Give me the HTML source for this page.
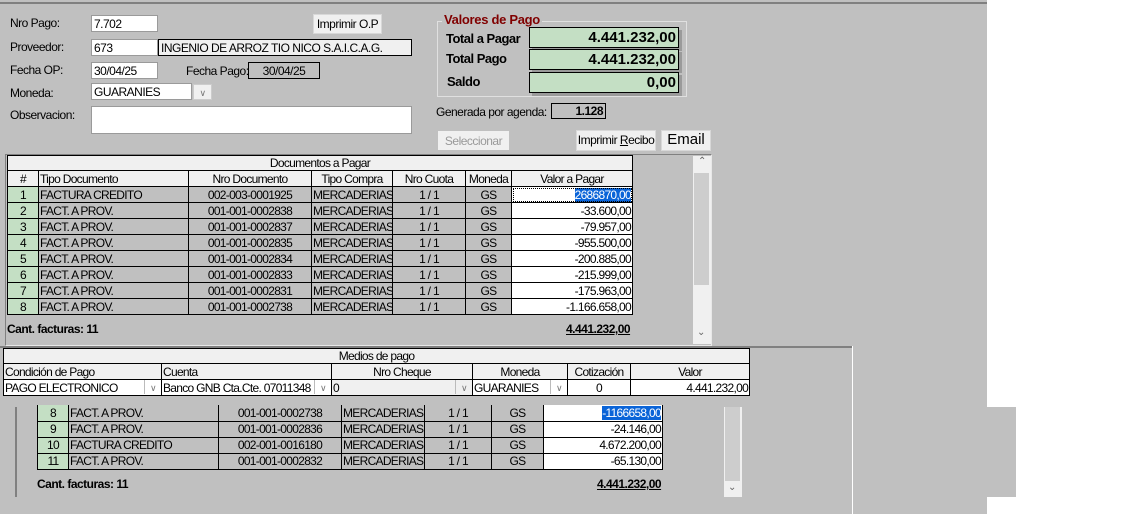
<!DOCTYPE html>
<html><head><meta charset="utf-8"><style>
*{box-sizing:border-box;margin:0;padding:0}
body{width:1123px;height:514px;background:#fff;font-family:"Liberation Sans",Arial,sans-serif;font-size:12px;color:#000;position:relative;overflow:hidden;letter-spacing:-0.5px}
.a{position:absolute}
.bg{background:#c0c0c0}
.inp{position:absolute;background:#fff;border:1px solid #9a9a9a;height:17px;padding:1px 2px;white-space:nowrap;overflow:hidden}
.ro{position:absolute;background:#f0f0f0;border:1px solid #000;height:17px;padding:1px 2px;white-space:nowrap}
.btn{position:absolute;background:#f0f0f0;border:1px solid #d8d8d8;text-align:center;line-height:18px;white-space:nowrap}
.grn{position:absolute;background:#c4dfc4;border:1px solid #000;box-shadow:3px 3px 0 #9a9a9a;text-align:right;font-weight:bold;font-size:15px;padding:1px 2px;height:21px;letter-spacing:0}
.lbl{position:absolute;white-space:nowrap}
table{position:absolute;border-collapse:collapse;table-layout:fixed}
td{border:1px solid #000;height:16px;padding:0 1px;white-space:nowrap;overflow:hidden;text-align:center;line-height:14px;letter-spacing:-0.7px}
td.l{text-align:left}
tr.d td{background:#c0c0c0}
tr.d td.n{background:#c4dfc4}
tr.d td.r{background:#fff;text-align:right}
tr.h td{background:#f0f0f0}
.sel{background:#0a64d8;color:#fff}
.dd{position:absolute;right:0;top:0;width:17px;height:14px;border-left:1px solid #bbb;color:#777;font-size:9px;text-align:center;line-height:16px}
td.c{position:relative;background:#fff;text-align:left}
.sb{position:absolute;background:#f0f0f0;color:#666;font-size:10px;text-align:center}
</style></head><body>
<div class="a bg" style="left:0;top:0;width:987px;height:514px"></div>
<div class="a bg" style="left:987px;top:407px;width:29px;height:90px"></div>
<div class="a" style="left:0;top:2px;width:987px;height:2px;background:#808080"></div>

<div class="lbl" style="left:10px;top:16px">Nro Pago:</div>
<div class="inp" style="left:91px;top:15px;width:67px">7.702</div>
<div class="btn" style="left:313px;top:14px;width:69px;height:20px">Imprimir O.P</div>
<div class="lbl" style="left:10px;top:40px">Proveedor:</div>
<div class="inp" style="left:91px;top:39px;width:67px">673</div>
<div class="ro" style="left:158px;top:39px;width:254px">INGENIO DE ARROZ TIO NICO S.A.I.C.A.G.</div>
<div class="lbl" style="left:10px;top:63px">Fecha OP:</div>
<div class="inp" style="left:91px;top:62px;width:67px">30/04/25</div>
<div class="lbl" style="left:186px;top:64px">Fecha Pago:</div>
<div class="ro" style="left:248px;top:62px;width:72px;text-align:center;background:#c0c0c0">30/04/25</div>
<div class="lbl" style="left:10px;top:86px">Moneda:</div>
<div class="inp" style="left:91px;top:83px;width:101px">GUARANIES</div>
<div class="a" style="left:193px;top:84px;width:19px;height:16px;background:#f0f0f0;border:1px solid #ccc;color:#777;font-size:9px;text-align:center;line-height:16px">&#8744;</div>
<div class="lbl" style="left:10px;top:108px">Observacion:</div>
<div class="inp" style="left:91px;top:106px;width:321px;height:28px"></div>

<div class="a" style="left:437px;top:21px;width:250px;height:76px;border:1px solid #e0e0e0"></div>
<div class="lbl" style="left:442px;top:12px;background:#c0c0c0;padding:0 2px;color:#800000;font-weight:bold;font-size:13px;letter-spacing:-0.3px">Valores de Pago</div>
<div class="lbl" style="left:446px;top:31px;font-weight:bold;font-size:13px">Total a Pagar</div>
<div class="grn" style="left:529px;top:27px;width:150px">4.441.232,00</div>
<div class="lbl" style="left:446px;top:51px;font-weight:bold;font-size:13px">Total Pago</div>
<div class="grn" style="left:529px;top:49px;width:150px">4.441.232,00</div>
<div class="lbl" style="left:447px;top:74px;font-weight:bold;font-size:13px">Saldo</div>
<div class="grn" style="left:529px;top:72px;width:150px">0,00</div>
<div class="lbl" style="left:436px;top:105px">Generada por agenda:</div>
<div class="ro" style="left:551px;top:103px;width:55px;height:16px;line-height:12px;text-align:right;font-weight:bold;background:#c0c0c0">1.128</div>
<div class="btn" style="left:438px;top:131px;width:71px;height:19px;color:#999;border-color:#f0f0f0">Seleccionar</div>
<div class="btn" style="left:576px;top:130px;width:80px;height:21px">Imprimir <u>R</u>ecibo</div>
<div class="btn" style="left:661px;top:130px;width:50px;height:21px;font-size:15px;letter-spacing:0">Email</div>

<div class="a" style="left:5px;top:154px;width:707px;height:192px;border:1px solid #e8e8e8;border-top-color:#808080;border-left-color:#808080"></div>
<table style="left:7px;top:155px;width:625px">
<colgroup><col style="width:31px"><col style="width:150px"><col style="width:123px"><col style="width:81px"><col style="width:73px"><col style="width:46px"><col style="width:121px"></colgroup>
<tr class="h"><td colspan="7" style="height:15px">Documentos a Pagar</td></tr>
<tr class="h"><td>#</td><td class="l">Tipo Documento</td><td>Nro Documento</td><td>Tipo Compra</td><td>Nro Cuota</td><td>Moneda</td><td>Valor a Pagar</td></tr>
<tr class="d"><td class="n">1</td><td class="l">FACTURA CREDITO</td><td>002-003-0001925</td><td>MERCADERIAS</td><td>1 / 1</td><td>GS</td><td class="r" style="outline:1px dotted #000;outline-offset:-2px"><span class="sel">2686870,00</span></td></tr>
<tr class="d"><td class="n">2</td><td class="l">FACT. A PROV.</td><td>001-001-0002838</td><td>MERCADERIAS</td><td>1 / 1</td><td>GS</td><td class="r">-33.600,00</td></tr>
<tr class="d"><td class="n">3</td><td class="l">FACT. A PROV.</td><td>001-001-0002837</td><td>MERCADERIAS</td><td>1 / 1</td><td>GS</td><td class="r">-79.957,00</td></tr>
<tr class="d"><td class="n">4</td><td class="l">FACT. A PROV.</td><td>001-001-0002835</td><td>MERCADERIAS</td><td>1 / 1</td><td>GS</td><td class="r">-955.500,00</td></tr>
<tr class="d"><td class="n">5</td><td class="l">FACT. A PROV.</td><td>001-001-0002834</td><td>MERCADERIAS</td><td>1 / 1</td><td>GS</td><td class="r">-200.885,00</td></tr>
<tr class="d"><td class="n">6</td><td class="l">FACT. A PROV.</td><td>001-001-0002833</td><td>MERCADERIAS</td><td>1 / 1</td><td>GS</td><td class="r">-215.999,00</td></tr>
<tr class="d"><td class="n">7</td><td class="l">FACT. A PROV.</td><td>001-001-0002831</td><td>MERCADERIAS</td><td>1 / 1</td><td>GS</td><td class="r">-175.963,00</td></tr>
<tr class="d"><td class="n">8</td><td class="l">FACT. A PROV.</td><td>001-001-0002738</td><td>MERCADERIAS</td><td>1 / 1</td><td>GS</td><td class="r">-1.166.658,00</td></tr>
</table>
<div class="lbl" style="left:7px;top:322px;font-weight:bold">Cant. facturas: 11</div>
<div class="lbl" style="left:566px;top:322px;font-weight:bold;text-decoration:underline">4.441.232,00</div>
<div class="sb" style="left:693px;top:156px;width:18px;height:188px">&#8963;</div>
<div class="a" style="left:694px;top:173px;width:15px;height:112px;background:#cdcdcd"></div>
<div class="lbl" style="left:697px;top:327px;color:#666;font-size:10px">&#8964;</div>

<div class="a" style="left:0;top:346px;width:852px;height:2px;background:#808080"></div>
<div class="a" style="left:852px;top:346px;width:1px;height:168px;background:#fff"></div>
<table style="left:3px;top:348px;width:746px">
<colgroup><col style="width:158px"><col style="width:170px"><col style="width:141px"><col style="width:95px"><col style="width:63px"><col style="width:119px"></colgroup>
<tr class="h"><td colspan="6" style="height:15px">Medios de pago</td></tr>
<tr class="h"><td class="l">Condición de Pago</td><td class="l">Cuenta</td><td>Nro Cheque</td><td>Moneda</td><td>Cotización</td><td>Valor</td></tr>
<tr><td class="c">PAGO ELECTRONICO<span class="dd">&#8744;</span></td><td class="c">Banco GNB Cta.Cte. 07011348<span class="dd">&#8744;</span></td><td class="c" style="background:#f0f0f0">0<span class="dd">&#8744;</span></td><td class="c">GUARANIES<span class="dd">&#8744;</span></td><td style="background:#fff">0</td><td style="background:#fff;text-align:right">4.441.232,00</td></tr>
</table>

<div class="a" style="left:15px;top:407px;width:2px;height:90px;background:#808080"></div>
<table style="left:37px;top:405px;width:625px">
<colgroup><col style="width:31px"><col style="width:150px"><col style="width:123px"><col style="width:83px"><col style="width:67px"><col style="width:52px"><col style="width:119px"></colgroup>
<tr class="d"><td class="n" style="border-top:none">8</td><td class="l" style="border-top:none">FACT. A PROV.</td><td style="border-top:none">001-001-0002738</td><td style="border-top:none">MERCADERIAS</td><td style="border-top:none">1 / 1</td><td style="border-top:none">GS</td><td class="r" style="border-top:none"><span class="sel">-1166658,00</span></td></tr>
<tr class="d"><td class="n">9</td><td class="l">FACT. A PROV.</td><td>001-001-0002836</td><td>MERCADERIAS</td><td>1 / 1</td><td>GS</td><td class="r">-24.146,00</td></tr>
<tr class="d"><td class="n">10</td><td class="l">FACTURA CREDITO</td><td>002-001-0016180</td><td>MERCADERIAS</td><td>1 / 1</td><td>GS</td><td class="r">4.672.200,00</td></tr>
<tr class="d"><td class="n">11</td><td class="l">FACT. A PROV.</td><td>001-001-0002832</td><td>MERCADERIAS</td><td>1 / 1</td><td>GS</td><td class="r">-65.130,00</td></tr>
</table>
<div class="lbl" style="left:37px;top:477px;font-weight:bold">Cant. facturas: 11</div>
<div class="lbl" style="left:597px;top:477px;font-weight:bold;text-decoration:underline">4.441.232,00</div>
<div class="sb" style="left:724px;top:407px;width:18px;height:90px"></div>
<div class="a" style="left:725px;top:407px;width:15px;height:74px;background:#cdcdcd"></div>
<div class="lbl" style="left:728px;top:482px;color:#666;font-size:10px">&#8964;</div>
</body></html>
